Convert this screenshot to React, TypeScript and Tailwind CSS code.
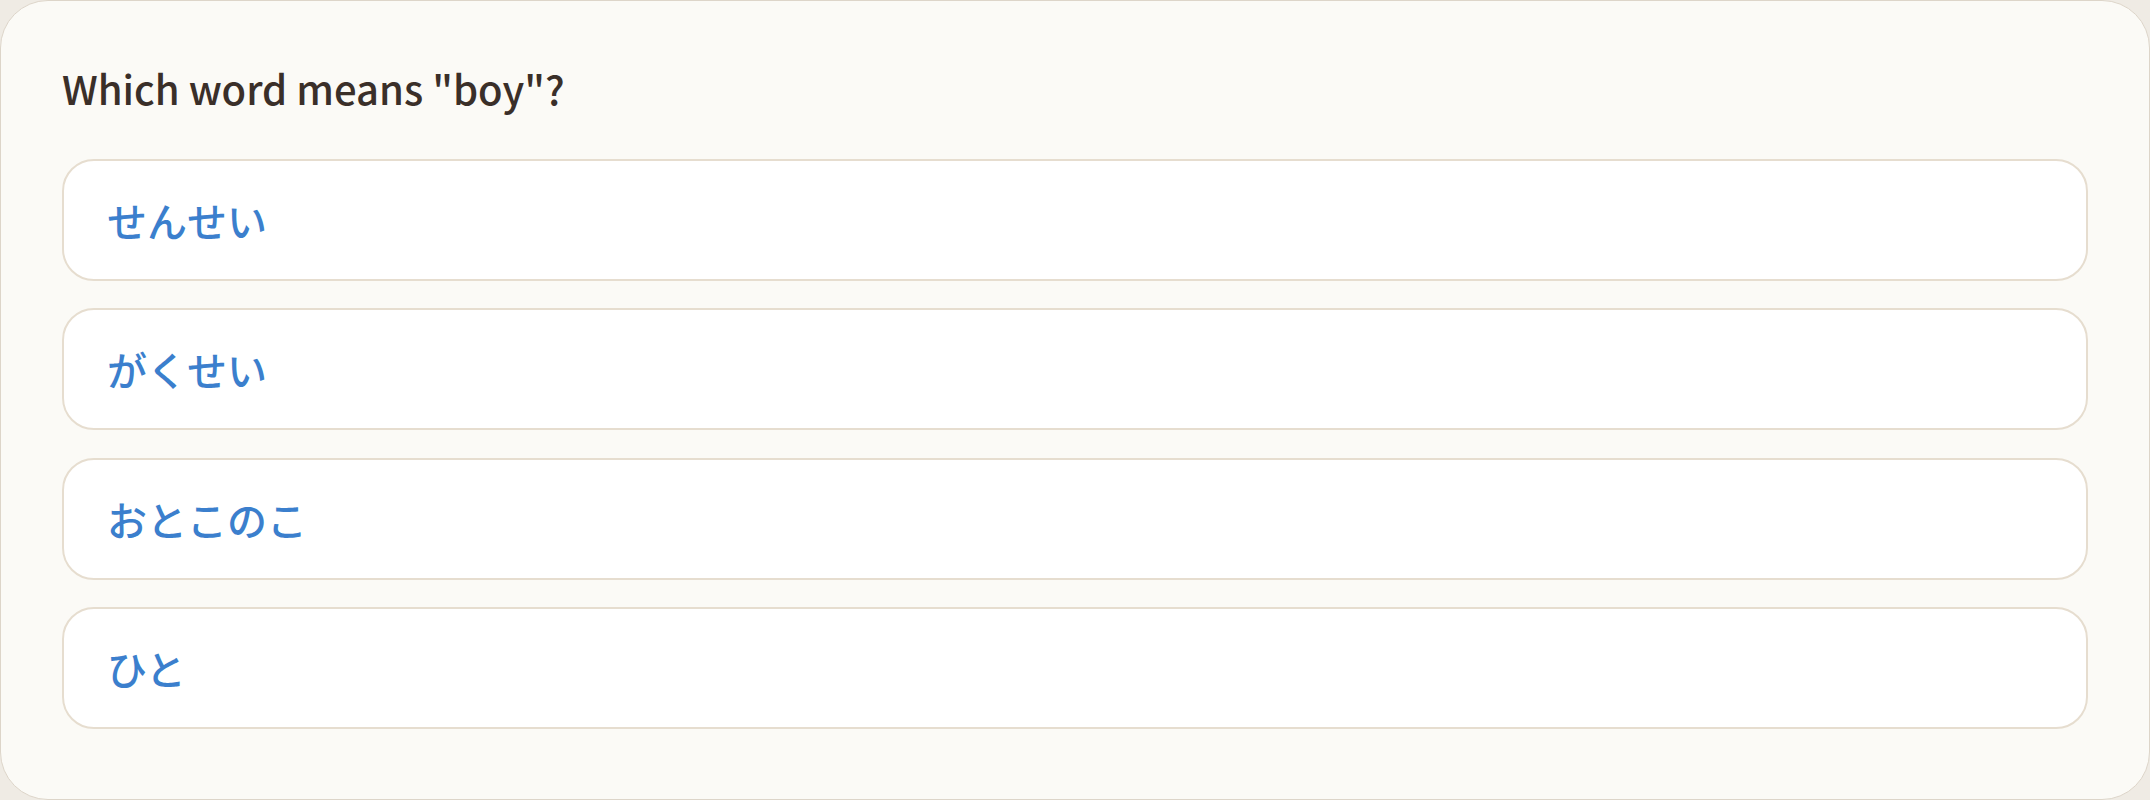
import React from "react";

const options = ["せんせい", "がくせい", "おとこのこ", "ひと"];

export default function App() {
  return (
    <div className="w-[2150px] h-[800px] bg-[#efebe4]">
      <div
        className="h-full w-full rounded-[48px] border border-[#ddd5c9] bg-[#fbfaf6] px-[61px] pt-[57px]"
        style={{ fontFamily: '"Noto Sans CJK JP", "Noto Sans", sans-serif' }}
      >
        <h2 className="text-[40px] leading-[60px] font-medium text-[#3a2f29]">
          Which word means "boy"?
        </h2>
        <div className="mt-[41px] flex flex-col gap-[27.3px]">
          {options.map((opt) => (
            <button
              key={opt}
              className="flex h-[122px] w-full items-center rounded-[32px] border-[2.5px] border-[#e6ddcf] bg-white px-[43px] text-left text-[40px] font-medium text-[#3b7fcd]"
            >
              {opt}
            </button>
          ))}
        </div>
      </div>
    </div>
  );
}
